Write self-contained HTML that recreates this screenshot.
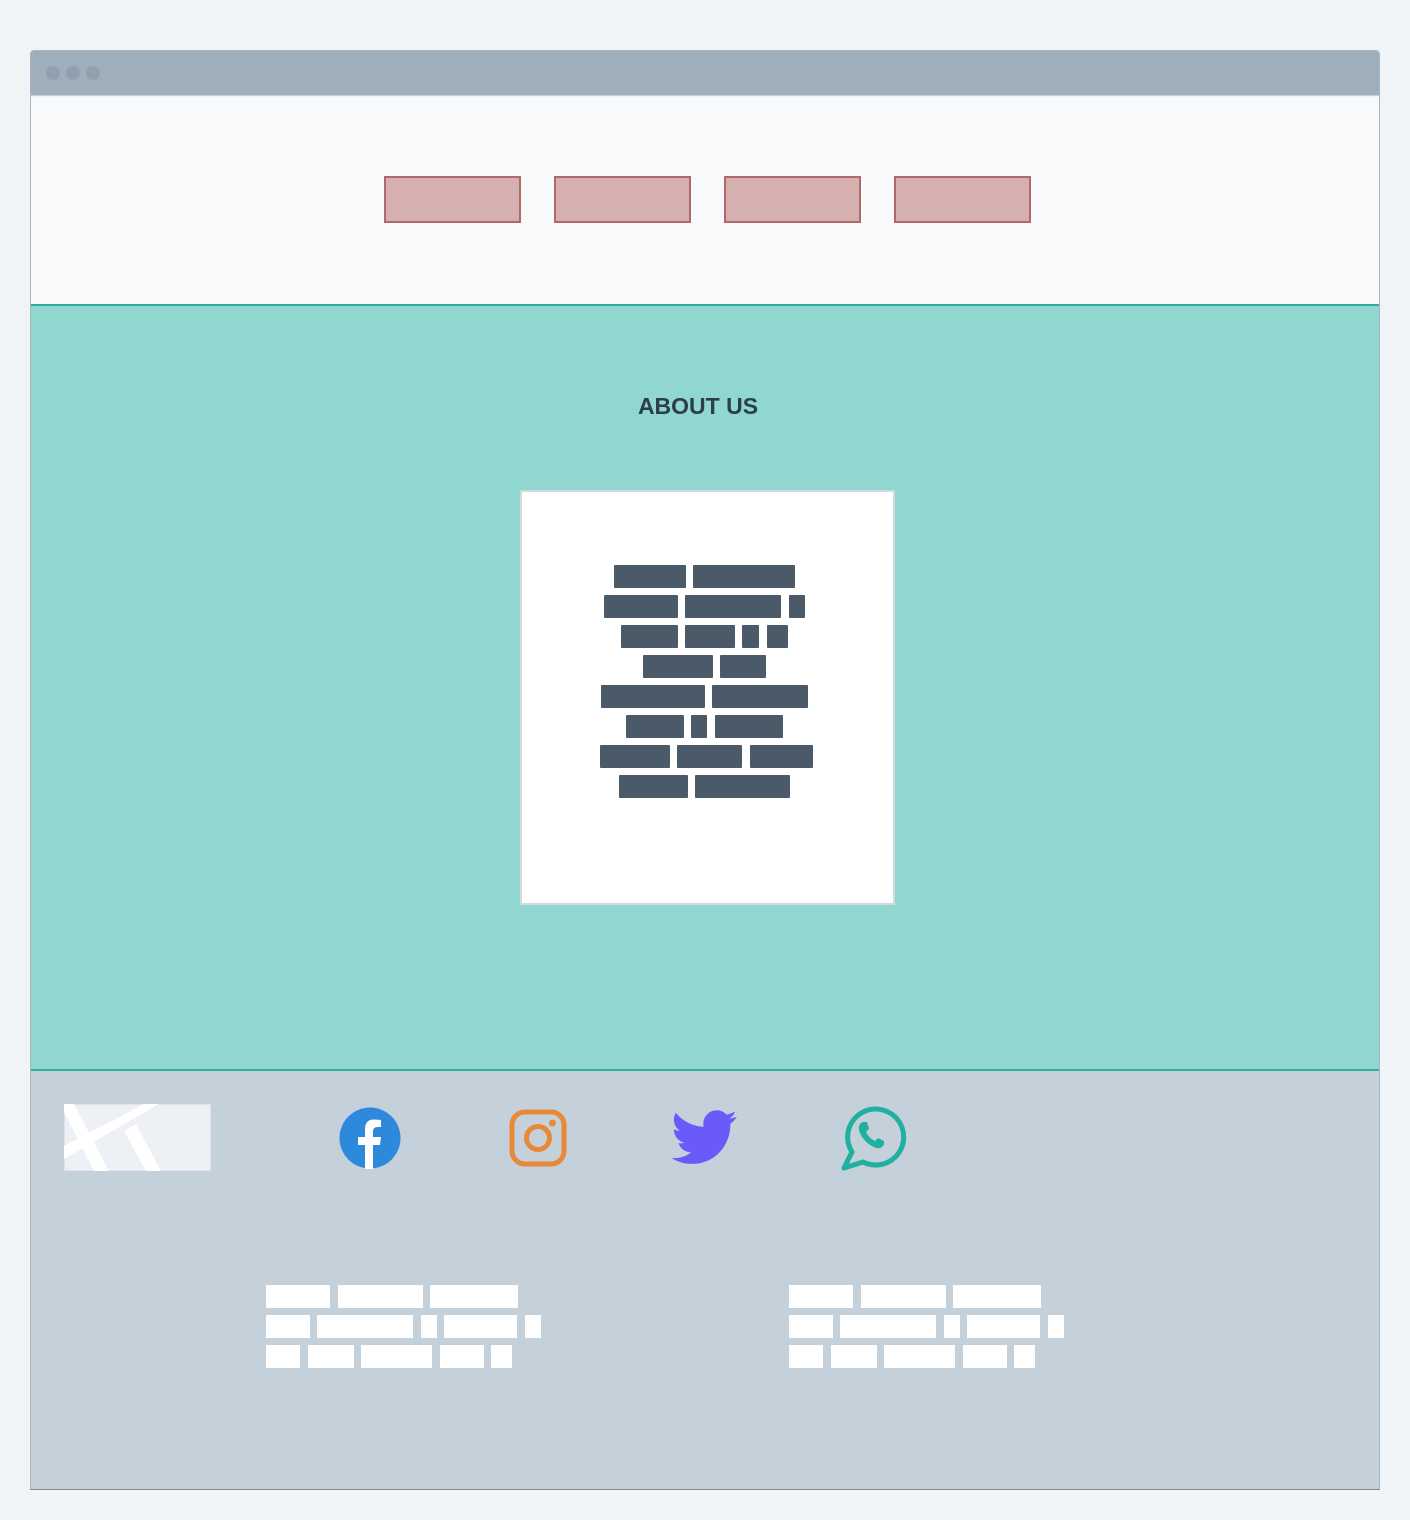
<!DOCTYPE html>
<html><head><meta charset="utf-8"><style>
*{margin:0;padding:0;box-sizing:border-box}
body{width:1410px;height:1520px;background:#f0f4f7;position:relative;font-family:"Liberation Sans",sans-serif;overflow:hidden}
.a{position:absolute}
.nav{position:absolute;top:176px;width:137px;height:47px;background:#d6b0b1;border:2px solid #b26868}
.b{position:absolute;background:#4a5a69;height:23px;border-radius:1px}
.w{position:absolute;background:#fff;height:23px}
</style></head><body>
<div class="a" style="left:30px;top:50px;width:1350px;height:1440px;border:1px solid #a9b6c2;border-radius:4px 4px 0 0;overflow:hidden">
 <div class="a" style="left:0;top:0;width:1350px;height:45px;background:#9eaebb;border-bottom:1px solid #c5d0d9"></div>
 <div class="a" style="left:15px;top:15px;width:14px;height:14px;border-radius:50%;background:#8fa0ae"></div>
 <div class="a" style="left:35px;top:15px;width:14px;height:14px;border-radius:50%;background:#8fa0ae"></div>
 <div class="a" style="left:55px;top:15px;width:14px;height:14px;border-radius:50%;background:#8fa0ae"></div>
 <div class="a" style="left:0;top:46px;width:1350px;height:208px;background:#f7f9fb"></div>
 <div class="a" style="left:0;top:253px;width:1350px;height:2px;background:#2bafa0"></div>
 <div class="a" style="left:0;top:255px;width:1350px;height:764px;background:#8fd7cf"></div>
 <div class="a" style="left:0;top:1018px;width:1350px;height:2px;background:#2bafa0"></div>
 <div class="a" style="left:0;top:1020px;width:1350px;height:420px;background:#c4d0da"></div>
</div>
<div class="a" style="left:30px;top:1489px;width:1350px;height:1px;background:#7f8d9b"></div>
<div class="nav" style="left:384px"></div>
<div class="nav" style="left:554px"></div>
<div class="nav" style="left:724px"></div>
<div class="nav" style="left:894px"></div>
<div class="a" style="left:598px;top:393px;width:200px;text-align:center;font-weight:bold;font-size:23px;color:#2c3d4d">ABOUT US</div>
<div class="a" style="left:520px;top:490px;width:375px;height:415px;background:#fff;border:2px solid #d4d9dd"></div>
<div class="b" style="left:614px;top:565px;width:72px"></div><div class="b" style="left:693px;top:565px;width:102px"></div>
<div class="b" style="left:604px;top:595px;width:74px"></div><div class="b" style="left:685px;top:595px;width:96px"></div><div class="b" style="left:789px;top:595px;width:16px"></div>
<div class="b" style="left:621px;top:625px;width:57px"></div><div class="b" style="left:685px;top:625px;width:50px"></div><div class="b" style="left:742px;top:625px;width:17px"></div><div class="b" style="left:767px;top:625px;width:21px"></div>
<div class="b" style="left:643px;top:655px;width:70px"></div><div class="b" style="left:720px;top:655px;width:46px"></div>
<div class="b" style="left:601px;top:685px;width:104px"></div><div class="b" style="left:712px;top:685px;width:96px"></div>
<div class="b" style="left:626px;top:715px;width:58px"></div><div class="b" style="left:691px;top:715px;width:16px"></div><div class="b" style="left:715px;top:715px;width:68px"></div>
<div class="b" style="left:600px;top:745px;width:70px"></div><div class="b" style="left:677px;top:745px;width:65px"></div><div class="b" style="left:750px;top:745px;width:63px"></div>
<div class="b" style="left:619px;top:775px;width:69px"></div><div class="b" style="left:695px;top:775px;width:95px"></div>
<svg class="a" style="left:64px;top:1104px" width="147" height="67" viewBox="0 0 147 67">
 <rect x="0.5" y="0.5" width="146" height="66" fill="#edf0f4" stroke="#dde3e9"/>
 <path d="M0 55 L95 0 L80 0 L0 42 Z M0 8 L30 67 L45 67 L10 0 L0 0 Z M60 27 L82 67 L97 67 L72 20 Z" fill="#fff"/>
</svg>
<svg class="a" style="left:339px;top:1107px" width="62" height="62" viewBox="0 0 62 62">
 <circle cx="31" cy="31" r="30.5" fill="#2e88dc"/>
 <path d="M34 62 V38 H41 L42 30 H34 V25 C34 22 35 20 39 20 H42 V13 C40 13 38 12.5 35 12.5 C29 12.5 26 16 26 22 V30 H19 V38 H26 V62 Z" fill="#fff"/>
</svg>
<svg class="a" style="left:509px;top:1109px" width="58" height="58" viewBox="0 0 58 58">
 <rect x="3" y="3" width="52" height="52" rx="13" fill="none" stroke="#e8893a" stroke-width="5"/>
 <circle cx="29" cy="29" r="11.5" fill="none" stroke="#e8893a" stroke-width="5"/>
 <circle cx="43.5" cy="14" r="3.5" fill="#e8893a"/>
</svg>
<svg class="a" style="left:672px;top:1110px" width="66" height="55" viewBox="0 0 24 20">
 <path d="M23.6 2.4c-.9.4-1.8.6-2.8.8 1-.6 1.8-1.6 2.1-2.7-.9.6-2 1-3.1 1.2C18.9.7 17.7.1 16.3.1c-2.7 0-4.9 2.2-4.9 4.9 0 .4 0 .8.1 1.1C7.4 5.9 3.8 4 1.4 1 1 1.700.7 2.600.7 3.5c0 1.7.9 3.2 2.2 4.1-.8 0-1.6-.2-2.2-.6v.1c0 2.4 1.7 4.4 3.900 4.8-.4.1-.8.2-1.3.2-.3 0-.6 0-.9-.1.6 2 2.4 3.4 4.6 3.4-1.7 1.3-3.8 2.1-6.1 2.1-.4 0-.8 0-1.2-.1 2.2 1.4 4.8 2.2 7.5 2.2 9.1 0 14-7.5 14-14v-.6c1-.7 1.8-1.6 2.4-2.6z" fill="#6a5af9"/>
</svg>
<svg class="a" style="left:838px;top:1103px" width="70" height="70" viewBox="0 0 70 70">
 <path d="M14 49 A28 28 0 1 1 25 59 L6 65 Z" fill="none" stroke="#1fb09f" stroke-width="5" stroke-linejoin="round"/>
 <path d="M25 19 C22 20 20 23 21 27 C23 35 30 42 38 45 C42 46 45 44 46 41 L46 38 L40 35 L37 38 C33 36 30 33 28 29 L31 26 L29 19 Z" fill="#1fb09f"/>
</svg>
<div class="w" style="left:266px;top:1285px;width:64px"></div><div class="w" style="left:338px;top:1285px;width:85px"></div><div class="w" style="left:430px;top:1285px;width:88px"></div>
<div class="w" style="left:266px;top:1315px;width:44px"></div><div class="w" style="left:317px;top:1315px;width:96px"></div><div class="w" style="left:421px;top:1315px;width:16px"></div><div class="w" style="left:444px;top:1315px;width:73px"></div><div class="w" style="left:525px;top:1315px;width:16px"></div>
<div class="w" style="left:266px;top:1345px;width:34px"></div><div class="w" style="left:308px;top:1345px;width:46px"></div><div class="w" style="left:361px;top:1345px;width:71px"></div><div class="w" style="left:440px;top:1345px;width:44px"></div><div class="w" style="left:491px;top:1345px;width:21px"></div>
<div class="w" style="left:789px;top:1285px;width:64px"></div><div class="w" style="left:861px;top:1285px;width:85px"></div><div class="w" style="left:953px;top:1285px;width:88px"></div>
<div class="w" style="left:789px;top:1315px;width:44px"></div><div class="w" style="left:840px;top:1315px;width:96px"></div><div class="w" style="left:944px;top:1315px;width:16px"></div><div class="w" style="left:967px;top:1315px;width:73px"></div><div class="w" style="left:1048px;top:1315px;width:16px"></div>
<div class="w" style="left:789px;top:1345px;width:34px"></div><div class="w" style="left:831px;top:1345px;width:46px"></div><div class="w" style="left:884px;top:1345px;width:71px"></div><div class="w" style="left:963px;top:1345px;width:44px"></div><div class="w" style="left:1014px;top:1345px;width:21px"></div>
</body></html>
